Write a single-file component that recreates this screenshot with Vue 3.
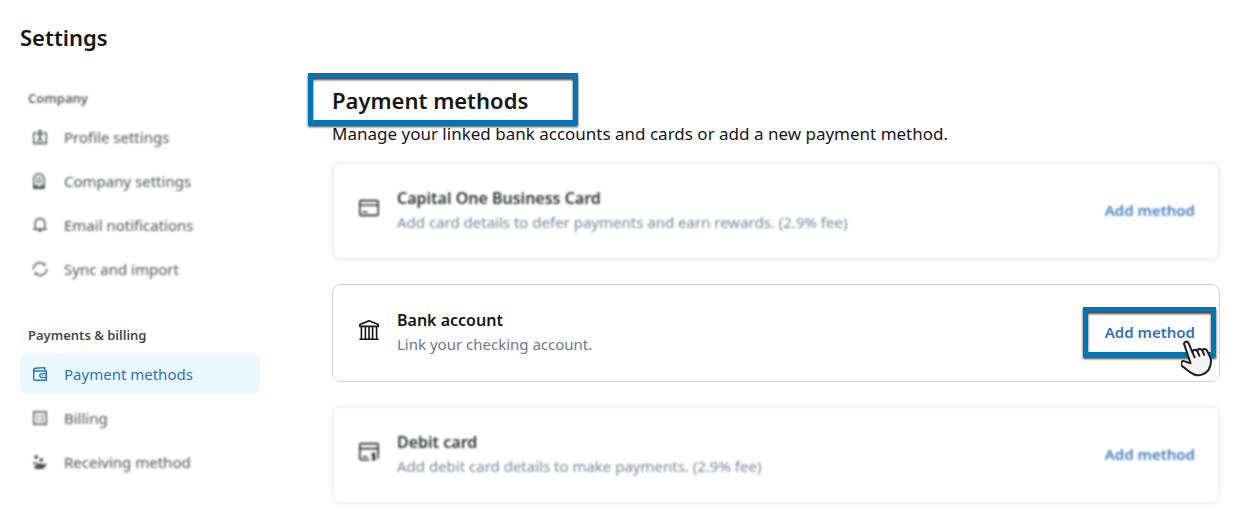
<script setup>
import { ref } from 'vue';

const active = ref('payment');

const groups = [
    {
        title: 'Company',
        faded: true,
        items: [
            { id: 'profile', label: 'Profile settings' },
            { id: 'company', label: 'Company settings' },
            { id: 'email', label: 'Email notifications' },
            { id: 'sync', label: 'Sync and import' },
        ],
    },
    {
        title: 'Payments & billing',
        faded: false,
        items: [
            { id: 'payment', label: 'Payment methods' },
            { id: 'billing', label: 'Billing' },
            { id: 'receiving', label: 'Receiving method' },
        ],
    },
];

const methods = [
    { id: 'credit', name: 'Capital One Business Card', text: 'Add card details to defer payments and earn rewards. (2.9% fee)' },
    { id: 'bank', name: 'Bank account', text: 'Link your checking account.', focus: true },
    { id: 'debit', name: 'Debit card', text: 'Add debit card details to make payments. (2.9% fee)' },
];
</script>

<template>
    <div class="page">
        <h1>Settings</h1>
        <div class="layout">
            <nav class="sidebar" aria-label="Settings">
                <section v-for="group in groups" :key="group.title" class="group">
                    <h3 :class="{ faded: group.faded }">{{ group.title }}</h3>
                    <ul>
                        <li v-for="item in group.items" :key="item.id">
                            <a
                                :href="'#' + item.id"
                                class="nav-link"
                                :class="item.id === active ? 'active' : 'faded'"
                                @click.prevent="active = item.id"
                            >
                                <svg class="nav-icon" viewBox="0 0 16 16" aria-hidden="true">
                                    <template v-if="item.id === 'profile'">
                                        <path d="M5.8 3.9H1.7v10.6h12.6V3.9h-4.1" />
                                        <path d="M8 3v6M5 5.6h6M8 8.4 5.6 13.2M8 8.4l2.4 4.8" />
                                        <circle cx="8" cy="2.4" r="1.6" class="solid" />
                                    </template>
                                    <template v-else-if="item.id === 'company'">
                                        <path d="M1.8 15.2V6a5.2 5.2 0 0 1 10.4 0v9.2z" />
                                        <path d="M4 5h6M4 7.4h6M4 9.8h6" class="thin" />
                                        <path d="M2 15.4V12h3l1 1.4h2L9 12h3v3.4z" class="solid" />
                                    </template>
                                    <template v-else-if="item.id === 'email'">
                                        <path d="M1.5 12.3h13M3.2 12.2V6.8C3.2 3.6 5 1.7 8 1.7s4.8 1.9 4.8 5.1v5.4" />
                                        <path d="M5.8 13h4.4L8 15.4z" class="solid" />
                                    </template>
                                    <template v-else-if="item.id === 'sync'">
                                        <path d="M1.4 8.4A6.4 6.4 0 0 1 11.8 3M14.6 7.6A6.4 6.4 0 0 1 4.2 13" />
                                        <path d="M13.4 1.4v3.4H10zM2.6 14.6v-3.4H6z" class="solid" />
                                    </template>
                                    <template v-else-if="item.id === 'payment'">
                                        <path d="M1.7 3.2v10q0 1.1 1.1 1.1h11.5V5H3.2Q1.7 5 1.7 3.6t1.5-1.4l9.6-.6V5" />
                                        <path d="M14.3 7.6H9.8a2 2 0 0 0 0 4h4.5zM10 9.6h1.2" />
                                    </template>
                                    <template v-else-if="item.id === 'billing'">
                                        <path d="M1.7 1.7h12.6v12.6H1.7z" />
                                        <path d="M4.2 5.4h2.4M8.4 5.4h3.4M4.2 8h2.4M8.4 8h3.4M4.2 10.8h2.4M8.4 10.8h3.4" class="thin" />
                                    </template>
                                    <template v-else>
                                        <circle cx="4.2" cy="3" r="1.9" class="solid" />
                                        <circle cx="9.4" cy="5.8" r="1.9" class="solid" />
                                        <path d="M1 8.2h3.4l1.4 1.8H1zM6.4 9.4h3.8l1.4 1.2 3.6-1.6-2.4 4.6-2.4 1.4H3.4L2 12.4z" class="solid" />
                                    </template>
                                </svg>
                                <span>{{ item.label }}</span>
                            </a>
                        </li>
                    </ul>
                </section>
            </nav>

            <main>
                <h2>
                    <span class="marked">Payment methods<i class="highlight heading-highlight"></i></span>
                </h2>
                <p class="lead">Manage your linked bank accounts and cards or add a new payment method.</p>

                <div class="cards">
                    <section v-for="method in methods" :key="method.id" class="card" :class="{ faded: !method.focus }">
                        <svg class="card-icon" viewBox="0 0 22 22" aria-hidden="true">
                            <template v-if="method.id === 'credit'">
                                <rect x="1.8" y="3.6" width="18.4" height="14.8" rx="1" />
                                <path d="M2 8.2h18M4.5 15h5" />
                            </template>
                            <template v-else-if="method.id === 'bank'">
                                <path d="M1.8 7.4V5.4L11 1.7l9.2 3.7v2zM1.4 20.2h19.2M3.4 8v12M7.4 8v12M11 8v12M14.6 8v12M18.6 8v12" />
                            </template>
                            <template v-else>
                                <path d="M11.5 18.8H2.8q-1 0-1-1V3.6q0-1 1-1h16.4q1 0 1 1v14.2" />
                                <path d="M2 7.6h18M4.5 15.8h5" />
                                <path d="M17.6 13.2q-3.4-1-3.4.8 0 1 1.5 1.4t1.5 1.6q0 1.6-3.6.8M15.7 11.4v8.6" />
                            </template>
                        </svg>
                        <div class="info">
                            <h4>{{ method.name }}</h4>
                            <p>{{ method.text }}</p>
                        </div>
                        <div class="action">
                            <button type="button">Add method</button>
                            <template v-if="method.focus">
                                <i class="highlight action-highlight"></i>
                                <svg class="cursor" viewBox="0 0 34 38" aria-hidden="true">
                                    <path d="M3.2 4.4C2.5 1.6 6.3.5 7.6 3.2l4 9.4c-.4-2.6 3.4-3.8 4.8-1.4-.2-2.4 3.6-3.2 5-.6.2-2.2 3.4-2.4 4.8.2l3 6.6c2 5-.1 9.7-1.8 12.8-3 4.2-9.6 6-13.6 4.6-4.4-1.6-7.6-5-12.4-8.4C-1.4 23.4.6 20 4 21.4l5.6 1.8z" />
                                    <path d="m11.6 12.6 2 4.8M16.4 11.2l2 4.6M21.4 10.6l1.8 4.2" />
                                </svg>
                            </template>
                        </div>
                    </section>
                </div>
            </main>
        </div>
    </div>
</template>

<style>
body {
    background: #fff;
}
</style>

<style scoped>
.page {
    padding: 22px 29px 9px 20px;
    color: #141616;
    font-family: 'Noto Sans', 'Open Sans', sans-serif;
}

h1,
h2,
h3,
h4,
p,
ul {
    margin: 0;
    padding: 0;
}

ul {
    list-style: none;
}

h1,
h2 {
    font-size: 22px;
    font-weight: 600;
    line-height: 30px;
}

.layout {
    display: grid;
    grid-template-columns: 240px minmax(0, 1fr);
    gap: 72px;
    margin-top: 33px;
}

.sidebar {
    display: flex;
    flex-direction: column;
    gap: 33px;
}

h3 {
    padding: 3px 8px 9px;
    color: #474b4b;
    font-size: 13px;
    font-weight: 600;
    line-height: 20px;
}

ul {
    display: flex;
    flex-direction: column;
    gap: 4px;
}

.nav-link {
    display: flex;
    align-items: center;
    gap: 16px;
    height: 40px;
    padding: 0 12px;
    border-radius: 8px;
    color: #3c4040;
    font-size: 15px;
    text-decoration: none;
}

.nav-link.active {
    background: #eaf8ff;
    color: #2e74b5;
}

.nav-icon {
    width: 16px;
    height: 16px;
}

svg {
    flex: none;
    fill: none;
    stroke: currentColor;
    stroke-width: 1.4;
    stroke-linejoin: round;
}

.solid {
    fill: currentColor;
    stroke: none;
}

.thin {
    stroke-width: 1;
}

.faded {
    filter: blur(1px);
    opacity: 0.9;
}

.marked,
.action {
    position: relative;
}

.lead {
    margin-top: 7px;
    font-size: 17px;
    line-height: 24px;
}

.cards {
    display: flex;
    flex-direction: column;
    gap: 24px;
    margin-top: 16px;
}

.card {
    display: flex;
    align-items: center;
    gap: 17px;
    padding: 23px 24px 25px 25px;
    border: 1px solid #d5d7d7;
    border-radius: 8px;
}

.card-icon {
    width: 22px;
    height: 22px;
    margin-bottom: 4px;
    stroke-width: 1.6;
}

.info {
    flex: 1;
}

h4 {
    font-size: 16px;
    font-weight: 600;
    line-height: 24px;
}

.info p {
    color: #6b7890;
    font-size: 15px;
    line-height: 24px;
}

button {
    padding: 0;
    border: none;
    background: none;
    color: #2f72b8;
    font: 600 15px/24px 'Noto Sans', 'Open Sans', sans-serif;
    cursor: pointer;
}

.highlight {
    position: absolute;
    border: 5px solid #0077b3;
    filter: drop-shadow(0 2px 1px #4a4040);
    pointer-events: none;
}

.heading-highlight {
    inset: -12px -50px -10px -24px;
}

.action-highlight {
    inset: -13px -21px -13px -22px;
}

.cursor {
    position: absolute;
    top: 20px;
    right: -20px;
    width: 34px;
    height: 38px;
    fill: #f5f5f5;
    stroke: #202020;
    stroke-width: 2;
    stroke-linecap: round;
}
</style>
